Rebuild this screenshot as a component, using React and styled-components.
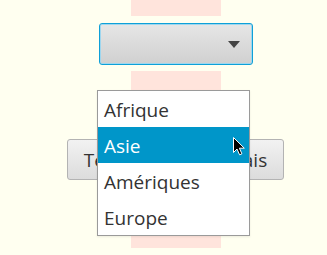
import React from "react";
import styled, { createGlobalStyle } from "styled-components";

const Global = createGlobalStyle`
  html, body { margin: 0; padding: 0; background: #fffff0; }
  body { font-family: "Open Sans", "Noto Sans", sans-serif; }
`;

const Page = styled.div`
  position: relative;
  width: 327px;
  height: 255px;
  box-sizing: border-box;
  padding-left: 25px;
  display: flex;
  flex-direction: column;
  align-items: center;
  background: #fffff0;
  overflow: hidden;
`;

const Strip = styled.div`
  width: 90px;
  height: ${(p) => p.$h}px;
  margin-top: ${(p) => p.$mt || 0}px;
  background: #ffe4dc;
  display: flex;
  align-items: center;
  justify-content: center;
  flex-shrink: 0;
`;

const Select = styled.div`
  box-sizing: border-box;
  width: 154px;
  height: 42px;
  margin-top: 7px;
  border: 1px solid #0ea0d8;
  border-radius: 3px;
  box-shadow: inset 0 0 0 1px #9fd6ee;
  background: linear-gradient(#e6e6e6, #d0d0d0);
  display: flex;
  align-items: center;
  justify-content: flex-end;
  padding-right: 12px;
  flex-shrink: 0;
`;

const Arrow = styled.div`
  width: 0;
  height: 0;
  border-left: 6.5px solid transparent;
  border-right: 6.5px solid transparent;
  border-top: 7px solid #444;
  margin-top: 1px;
`;

const Button = styled.button`
  flex-shrink: 0;
  box-sizing: border-box;
  width: 217px;
  height: 41px;
  border: 1px solid #b3b3b3;
  border-radius: 3px;
  background: linear-gradient(#f2f2f2, #dcdcdc);
  font-family: "Open Sans", "Noto Sans", sans-serif;
  font-size: 19px;
  color: #333;
  padding: 0;
  white-space: nowrap;
  margin-left: -1px;
`;

const Menu = styled.ul`
  position: absolute;
  left: 97px;
  top: 90px;
  width: 153px;
  margin: 0;
  padding: 0;
  list-style: none;
  box-sizing: border-box;
  border: 1px solid #9a9a9a;
  background: #fff;
  box-shadow: 0 1px 2px rgba(0, 0, 0, 0.08);
`;

const Item = styled.li`
  position: relative;
  height: 36px;
  box-sizing: border-box;
  padding: 2px 0 0 6px;
  line-height: 34px;
  font-size: 19px;
  color: ${(p) => (p.$active ? "#fff" : "#333")};
  background: ${(p) => (p.$active ? "#0096c9" : "transparent")};
`;

const Cursor = styled.svg`
  position: absolute;
  left: 135px;
  top: 10px;
`;

const regions = ["Afrique", "Asie", "Amériques", "Europe"];

export default function App() {
  return (
    <>
      <Global />
      <Page>
        <Strip $h={16} />
        <Select>
          <Arrow />
        </Select>
        <Strip $h={177} $mt={6}>
          <Button>Terminer en français</Button>
        </Strip>
        <Menu>
          {regions.map((r, i) => (
            <Item key={r} $active={i === 1}>
              {r}
              {i === 1 && (
                <Cursor width="13" height="20" viewBox="0 0 13 20">
                  <path
                    d="M0.5 0.5 L0.5 15.5 L4 12 L6.6 17.8 L8.9 16.8 L6.4 11.2 L11.3 11.2 Z"
                    fill="#000"
                    stroke="#fff"
                    strokeWidth="1"
                    strokeLinejoin="miter"
                  />
                </Cursor>
              )}
            </Item>
          ))}
        </Menu>
      </Page>
    </>
  );
}
